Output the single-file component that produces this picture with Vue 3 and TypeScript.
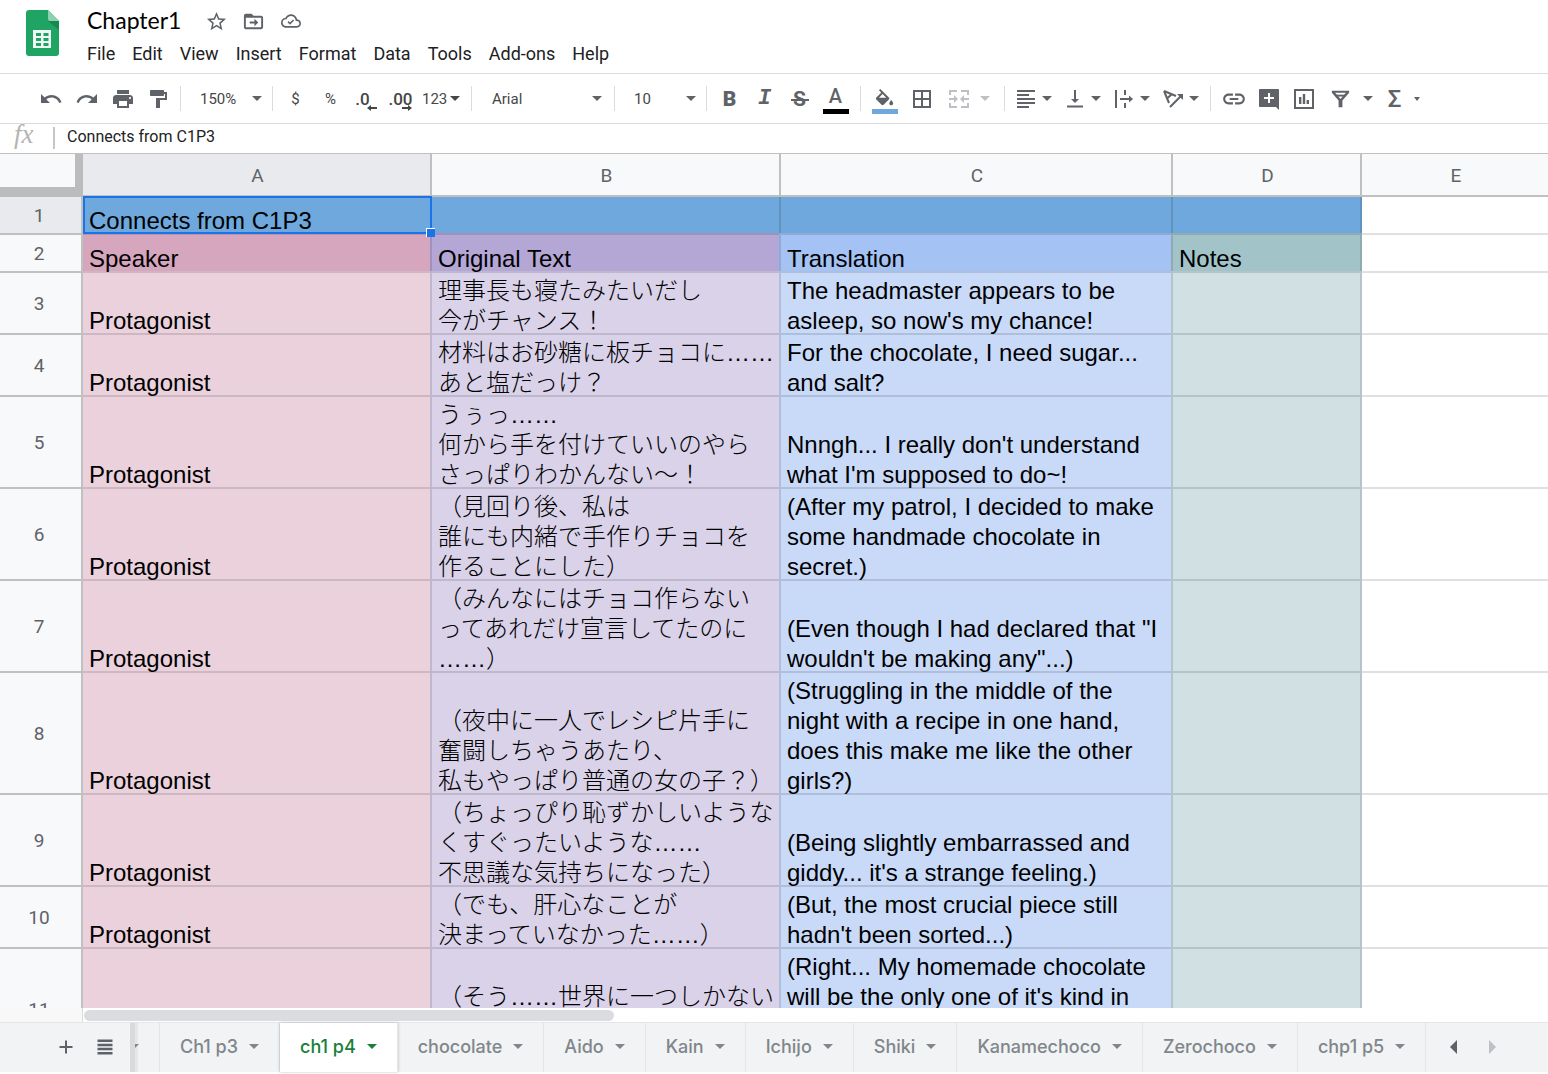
<script setup lang="ts">
interface Glyph {
  fill?: string
  line?: string
}

const glyphs: Record<string, Glyph> = {
  star: { fill: 'M22 9.24l-7.19-.62L12 2 9.19 8.63 2 9.24l5.46 4.73L5.82 21 12 17.27 18.18 21l-1.63-7.03L22 9.24zM12 15.4l-3.76 2.27 1-4.28-3.32-2.88 4.38-.38L12 6.1l1.71 4.04 4.38.38-3.32 2.88 1 4.28L12 15.4z' },
  move: { fill: 'M20 6h-8l-2-2H4c-1.1 0-1.99.9-1.99 2L2 18c0 1.1.9 2 2 2h16c1.1 0 2-.9 2-2V8c0-1.1-.9-2-2-2zm0 12H4V8h16v10zM13 17l4-4-4-4v3H8v2h5z' },
  cloud: { fill: 'M19.35 10.04C18.67 6.59 15.64 4 12 4 9.11 4 6.6 5.64 5.35 8.04 2.34 8.36 0 10.91 0 14c0 3.31 2.69 6 6 6h13c2.76 0 5-2.24 5-5 0-2.64-2.05-4.78-4.65-4.96zM19 18H6c-2.21 0-4-1.79-4-4 0-2.05 1.53-3.76 3.56-3.97l1.07-.11.5-.95C8.08 7.14 9.94 6 12 6c2.62 0 4.88 1.86 5.39 4.43l.3 1.5 1.53.11c1.56.1 2.78 1.41 2.78 2.96 0 1.65-1.35 3-3 3zm-8.2-4.2l-1.7-1.7-1.3 1.3 3 3 5-5-1.3-1.3z' },
  undo: { fill: 'M12.5 8c-2.65 0-5.05.99-6.9 2.6L2 7v9h9l-3.62-3.62c1.39-1.16 3.16-1.88 5.12-1.88 3.54 0 6.55 2.31 7.6 5.5l2.37-.78C21.08 11.03 17.15 8 12.5 8z' },
  redo: { fill: 'M18.4 10.6C16.55 8.99 14.15 8 11.5 8c-4.65 0-8.58 3.03-9.96 7.22L3.9 16c1.05-3.19 4.05-5.5 7.6-5.5 1.95 0 3.73.72 5.12 1.88L13 16h9V7l-3.6 3.6z' },
  print: { fill: 'M19 8H5c-1.66 0-3 1.34-3 3v6h4v4h12v-4h4v-6c0-1.66-1.34-3-3-3zm-3 11H8v-5h8v5zm3-7c-.55 0-1-.45-1-1s.45-1 1-1 1 .45 1 1-.45 1-1 1zm-1-9H6v4h12V3z' },
  paint: { fill: 'M4 3h12c.6 0 1 .4 1 1v1h3v8h-7v8h-4V11h9V7h-1v1c0 .6-.4 1-1 1H4c-.6 0-1-.4-1-1V4c0-.6.4-1 1-1z' },
  bucket: { fill: 'M16.56 8.94L7.62 0 6.21 1.41l2.38 2.38-5.15 5.15c-.59.59-.59 1.54 0 2.12l5.5 5.5c.29.29.68.44 1.06.44s.77-.15 1.06-.44l5.5-5.5c.59-.58.59-1.53 0-2.12zM6.2 9L10 5.21 13.8 9zM19 11.5s-2 2.17-2 3.5c0 1.1.9 2 2 2s2-.9 2-2c0-1.33-2-3.5-2-3.5z' },
  borders: { fill: 'M3 3v18h18V3H3zm8 16H5v-6h6v6zm0-8H5V5h6v6zm8 8h-6v-6h6v6zm0-8h-6V5h6v6z' },
  merge: { fill: 'M7 8l4 4-4 4zM17 8l-4 4 4 4z', line: 'M3 8V4h7M14 4h7v4M3 16v4h7M14 20h7v-4M2 12h6M16 12h6' },
  left: { fill: 'M3 3h18v2H3zM3 7h12v2H3zM3 11h18v2H3zM3 15h18v2H3zM3 19h12v2H3z' },
  bottom: { fill: 'M16 12h-3V3h-2v9H8l4 4 4-4zM4 18.5v2h16v-2z' },
  overflow: { fill: 'M17 8.5l4 3.5-4 3.5z', line: 'M4 3v18M13 3v5M13 16v5M8 12h10' },
  rotate: { fill: 'M16 7h6v6z', line: 'M3 4l5 12M3 4l12 5M6 11.5l5-4.5M9 20L20 9' },
  link: { fill: 'M3.9 12c0-1.71 1.39-3.1 3.1-3.1h4V7H7c-2.76 0-5 2.24-5 5s2.24 5 5 5h4v-1.9H7c-1.71 0-3.1-1.39-3.1-3.1zM8 13h8v-2H8v2zm9-6h-4v1.9h4c1.71 0 3.1 1.39 3.1 3.1s-1.39 3.1-3.1 3.1h-4V17h4c2.76 0 5-2.24 5-5s-2.24-5-5-5z' },
  comment: { fill: 'M22 3c0-.6-.4-1-1-1H3c-.6 0-1 .4-1 1v16c0 .6.4 1 1 1h16l3 3V3zm-5 9h-4v4h-2v-4H7v-2h4V6h2v4h4v2z' },
  chart: { fill: 'M7 10h2.4v7H7zM10.8 7h2.4v10h-2.4zM14.6 13H17v4h-2.4z', line: 'M3 3h18v18H3z' },
  filter: { fill: 'M3 4h18v2l-7 8v7h-4v-7L3 6zm3.4 2L12 12.400 17.600 6z', line: 'M7 9h10' },
  plus: { line: 'M12 5.5v13M5.5 12h13' },
  list: { fill: 'M3 3h18v3H3zM3 8h18v3H3zM3 13h18v3H3zM3 18h18v3H3z' }
}

const menus: string[] = ['File', 'Edit', 'View', 'Insert', 'Format', 'Data', 'Tools', 'Add-ons', 'Help']
const aligners: { icon: string; label: string }[] = [
  { icon: 'left', label: 'Horizontal align' },
  { icon: 'bottom', label: 'Vertical align' },
  { icon: 'overflow', label: 'Text wrapping' },
  { icon: 'rotate', label: 'Text rotation' }
]
const columns: string[] = ['A', 'B', 'C', 'D', 'E']

interface Row {
  kind: 'banner' | 'names' | 'body'
  cells: string[][]
}

const line = (jp: string[], en: string[], who = 'Protagonist'): Row => ({
  kind: 'body',
  cells: [[who], jp, en, []]
})

const rows: Row[] = [
  { kind: 'banner', cells: [['Connects from C1P3'], [], [], []] },
  { kind: 'names', cells: [['Speaker'], ['Original Text'], ['Translation'], ['Notes']] },
  line(['理事長も寝たみたいだし', '今がチャンス！'], ['The headmaster appears to be', "asleep, so now's my chance!"]),
  line(['材料はお砂糖に板チョコに……', 'あと塩だっけ？'], ['For the chocolate, I need sugar...', 'and salt?']),
  line(['うぅっ……', '何から手を付けていいのやら', 'さっぱりわかんない～！'], ["Nnngh... I really don't understand", "what I'm supposed to do~!"]),
  line(['（見回り後、私は', '誰にも内緒で手作りチョコを', '作ることにした）'], ['(After my patrol, I decided to make', 'some handmade chocolate in', 'secret.)']),
  line(['（みんなにはチョコ作らない', 'ってあれだけ宣言してたのに', '……）'], ['(Even though I had declared that "I', 'wouldn\'t be making any"...)']),
  line(['（夜中に一人でレシピ片手に', '奮闘しちゃうあたり、', '私もやっぱり普通の女の子？）'], ['(Struggling in the middle of the', 'night with a recipe in one hand,', 'does this make me like the other', 'girls?)']),
  line(['（ちょっぴり恥ずかしいような', 'くすぐったいような……', '不思議な気持ちになった）'], ['(Being slightly embarrassed and', "giddy... it's a strange feeling.)"]),
  line(['（でも、肝心なことが', '決まっていなかった……）'], ['(But, the most crucial piece still', "hadn't been sorted...)"]),
  line(['（そう……世界に一つしかない', '', ''], ['(Right... My homemade chocolate', "will be the only one of it's kind in", '', ''], '')
]

const tabs: string[] = ['Ch1 p3', 'ch1 p4', 'chocolate', 'Aido', 'Kain', 'Ichijo', 'Shiki', 'Kanamechoco', 'Zerochoco', 'chp1 p5']
const activeTab = 'ch1 p4'

const Icon = (props: { name: string; size?: number }) => {
  const g = glyphs[props.name]
  const size = props.size ?? 24
  return h('svg', { viewBox: '0 0 24 24', width: size, height: size, 'aria-hidden': 'true' }, [
    g.fill ? h('path', { d: g.fill, fill: 'currentColor', 'fill-rule': 'evenodd' }) : null,
    g.line ? h('path', { d: g.line, fill: 'none', stroke: 'currentColor', 'stroke-width': 2 }) : null
  ])
}
Icon.props = ['name', 'size']
</script>

<script lang="ts">
import { h } from 'vue'
</script>

<template>
  <div class="app">
    <header class="top">
      <svg class="logo" viewBox="0 0 33 46" width="33" height="46" aria-hidden="true">
        <path d="M3 0h19l11 11v32a3 3 0 0 1-3 3H3a3 3 0 0 1-3-3V3a3 3 0 0 1 3-3z" fill="#1fa463" />
        <path d="M22 11h11v9z" fill="#17894f" />
        <path d="M22 0l11 11H24a2 2 0 0 1-2-2z" fill="#8ed1b1" />
        <path fill-rule="evenodd" d="M7 20h18v18H7zM10 23v3h5v-3zm7.5 0v3h5v-3zM10 28v3h5v-3zm7.5 0v3h5v-3zM10 33v3h5v-3zm7.5 0v3h5v-3z" fill="#f1f8f4" />
      </svg>
      <div class="doc">
        <div class="title-row">
          <input class="title" aria-label="Document name" value="Chapter1" />
          <button class="flat" aria-label="Star"><Icon name="star" :size="23" /></button>
          <button class="flat" aria-label="Move"><Icon name="move" :size="23" /></button>
          <button class="flat" aria-label="Document status"><Icon name="cloud" :size="20" /></button>
        </div>
        <nav class="menus">
          <button v-for="m in menus" :key="m" class="menu">{{ m }}</button>
        </nav>
      </div>
    </header>

    <div class="toolbar" role="toolbar" aria-label="Main">
      <div class="group history">
        <button class="tool" aria-label="Undo"><Icon name="undo" /></button>
        <button class="tool" aria-label="Redo"><Icon name="redo" /></button>
        <button class="tool" aria-label="Print"><Icon name="print" /></button>
        <button class="tool" aria-label="Paint format"><Icon name="paint" /></button>
      </div>
      <div class="group zoom">
        <select aria-label="Zoom"><option>150%</option></select>
        <i class="caret"></i>
      </div>
      <div class="group number">
        <button class="tool">$</button>
        <button class="tool">%</button>
        <button class="tool decimal less" aria-label="Decrease decimal places">
          .0<svg class="arrow" viewBox="0 0 10 6" width="10" height="6"><path d="M0 3l4-3v2h6v2H4v2z" fill="currentColor" /></svg>
        </button>
        <button class="tool decimal" aria-label="Increase decimal places">
          .00<svg class="arrow" viewBox="0 0 10 6" width="10" height="6"><path d="M10 3L6 0v2H0v2h6v2z" fill="currentColor" /></svg>
        </button>
        <button class="formats">123<i class="caret"></i></button>
      </div>
      <div class="group font">
        <select aria-label="Font"><option>Arial</option></select>
        <i class="caret"></i>
      </div>
      <div class="group size">
        <select aria-label="Font size"><option>10</option></select>
        <i class="caret"></i>
      </div>
      <div class="group style">
        <button class="tool bold">B</button>
        <button class="tool italic">I</button>
        <button class="tool strike"><span>S</span></button>
        <button class="tool swatch"><span>A</span></button>
      </div>
      <div class="group cells">
        <button class="tool swatch paint" aria-label="Fill color"><Icon name="bucket" :size="23" /></button>
        <button class="tool wide" aria-label="Borders"><Icon name="borders" /></button>
        <button class="tool off" aria-label="Merge cells"><Icon name="merge" /></button>
        <button class="drop off" aria-label="Merge type"><i class="caret"></i></button>
      </div>
      <div class="group aligns">
        <button v-for="a in aligners" :key="a.icon" class="split" :aria-label="a.label">
          <Icon :name="a.icon" /><i class="caret"></i>
        </button>
      </div>
      <div class="group insert">
        <button class="tool" aria-label="Insert link"><Icon name="link" :size="26" /></button>
        <button class="tool" aria-label="Insert comment"><Icon name="comment" /></button>
        <button class="tool" aria-label="Insert chart"><Icon name="chart" /></button>
        <button class="tool filter" aria-label="Filter"><Icon name="filter" :size="23" /></button>
        <button class="drop" aria-label="Filter views"><i class="caret"></i></button>
        <button class="tool sigma">Σ</button>
        <button class="tiny" aria-label="Functions"><i class="caret small"></i></button>
      </div>
    </div>

    <div class="formula">
      <span class="fx">fx</span>
      <input aria-label="Formula" value="Connects from C1P3" />
    </div>

    <main class="grid">
      <table>
        <colgroup>
          <col class="w-num" /><col class="w-a" /><col class="w-b" /><col class="w-c" /><col class="w-d" /><col />
        </colgroup>
        <thead>
          <tr>
            <td class="corner"></td>
            <th v-for="c in columns" :key="c" scope="col" :class="'head-' + c.toLowerCase()">{{ c }}</th>
          </tr>
        </thead>
        <tbody>
          <tr v-for="(row, r) in rows" :key="r" :class="row.kind">
            <th scope="row">{{ r + 1 }}</th>
            <td v-for="(cell, c) in row.cells" :key="c" :class="'col-' + columns[c].toLowerCase()">
              <div v-if="cell.length" class="text">
                <span v-for="(t, i) in cell" :key="i">{{ t }}</span>
              </div>
              <div v-if="r === 0 && c === 0" class="selection"><i></i></div>
            </td>
            <td class="col-e"></td>
          </tr>
        </tbody>
      </table>
    </main>

    <div class="scroll"><div class="track"><div class="thumb"></div></div></div>

    <footer class="sheets">
      <div class="sheet-tools">
        <button class="flat" aria-label="Add sheet"><Icon name="plus" /></button>
        <button class="flat" aria-label="All sheets"><Icon name="list" :size="20" /></button>
      </div>
      <div class="cut"><i class="caret"></i></div>
      <button v-for="t in tabs" :key="t" class="tab" :class="{ active: t === activeTab }">
        {{ t }}<i class="caret"></i>
      </button>
      <div class="pager">
        <button class="flat" aria-label="Scroll left"><i class="prev"></i></button>
        <button class="flat" aria-label="Scroll right"><i class="next"></i></button>
      </div>
    </footer>
  </div>
</template>

<style>
body {
  margin: 0;
  background: #fff;
}
</style>

<style scoped>
* {
  box-sizing: border-box;
}
.app {
  display: flex;
  flex-direction: column;
  height: 100vh;
  padding-bottom: 2px;
  overflow: hidden;
  font-family: Roboto, 'Liberation Sans', sans-serif;
  color: #202124;
}
button,
input,
select {
  margin: 0;
  padding: 0;
  border: 0;
  outline: 0;
  background: none;
  font: inherit;
  color: inherit;
}
svg {
  display: block;
  flex: none;
}
.caret {
  flex: none;
  border: 5px solid transparent;
  border-top-color: currentColor;
  border-bottom: 0;
}
.flat {
  display: flex;
  align-items: center;
  justify-content: center;
}

/* header */
.top {
  display: flex;
  flex: none;
  height: 73px;
  padding-left: 26px;
}
.logo {
  margin-top: 10px;
}
.doc {
  margin-left: 20px;
}
.title-row {
  display: flex;
  align-items: center;
  height: 42px;
  padding-left: 8px;
  color: #5f6368;
}
.title {
  width: 111px;
  padding-bottom: 3px;
  font: 23px Lato, sans-serif;
  color: #000;
}
.title-row .flat {
  width: 37px;
  height: 40px;
}
.menus {
  display: flex;
  height: 22px;
}
.menu {
  padding: 0 9px 0 8px;
  font-size: 18px;
}

/* toolbar */
.toolbar {
  display: flex;
  flex: none;
  align-items: center;
  height: 51px;
  border-top: 1px solid #dadce0;
  border-bottom: 1px solid #dadce0;
  color: #5f6368;
  font-size: 15px;
}
.group {
  display: flex;
  flex: none;
  align-items: center;
  height: 25px;
  border-right: 1px solid #dadce0;
}
.tool {
  display: flex;
  align-items: center;
  justify-content: center;
  flex: none;
  width: 35px;
  height: 35px;
}
.history {
  width: 181px;
  padding-left: 33px;
  gap: 1px;
}
.zoom {
  width: 92px;
  padding: 0 10px 0 19px;
}
select {
  appearance: none;
  flex: 1;
  min-width: 0;
  color: #444746;
}
.number {
  width: 199px;
  padding-left: 5px;
  color: #444746;
}
.decimal {
  position: relative;
  font-size: 17px;
  font-weight: 500;
}
.decimal .arrow {
  position: absolute;
  right: 6px;
  bottom: 5px;
}
.less {
  padding-right: 6px;
}
.formats {
  display: flex;
  align-items: center;
  gap: 3px;
  padding-left: 4px;
}
.font {
  width: 143px;
  padding: 0 12px 0 20px;
}
.size {
  width: 92px;
  padding: 0 10px 0 19px;
}
.style {
  width: 154px;
  padding-left: 5px;
}
.bold {
  font-size: 21px;
  font-weight: 900;
}
.italic {
  font: italic bold 22px 'Liberation Mono', monospace;
}
.strike {
  position: relative;
  font-size: 21px;
  font-weight: 700;
}
.strike::after {
  content: '';
  position: absolute;
  left: 9px;
  right: 8px;
  top: 18px;
  height: 2px;
  background: currentColor;
}
.swatch {
  position: relative;
  width: 37px;
  padding-bottom: 6px;
  font-size: 20px;
  font-weight: 500;
}
.swatch::after {
  content: '';
  position: absolute;
  left: 6px;
  right: 5px;
  bottom: 2px;
  height: 5px;
  background: #000;
}
.paint {
  padding: 4px 0 0;
}
.paint::after {
  background: #6fa8dc;
}
.cells {
  width: 144px;
  padding-left: 5px;
}
.wide {
  width: 38px;
}
.drop {
  display: flex;
  justify-content: center;
  width: 18px;
}
.off {
  color: #bdc1c6;
}
.aligns {
  width: 206px;
  padding-left: 5px;
}
.split {
  display: flex;
  align-items: center;
  gap: 4px;
  width: 49px;
  padding-left: 4px;
}
.insert {
  padding-left: 5px;
  border-right: 0;
}
.filter {
  width: 38px;
}
.sigma {
  font-size: 24px;
  font-weight: 500;
}
.tiny {
  display: flex;
  padding-left: 2px;
}
.small {
  border-width: 4px 3px 0;
}

/* formula bar */
.formula {
  display: flex;
  flex: none;
  height: 30px;
  padding-top: 3px;
  border-bottom: 1px solid #c0c0c0;
}
.fx {
  width: 55px;
  height: 22px;
  padding-left: 14px;
  border-right: 2px solid #c6c6c6;
  font: italic 27px/14px 'Liberation Serif', serif;
  color: #b4b4b4;
}
.formula input {
  flex: 1;
  height: 18px;
  padding-left: 12px;
  font-size: 16px;
  color: #222;
}

/* spreadsheet */
.grid {
  flex: 1;
  min-height: 0;
  overflow: hidden;
}
table {
  width: 100%;
  table-layout: fixed;
  border-collapse: separate;
  border-spacing: 0;
}
.w-num {
  width: 83px;
}
.w-a {
  width: 347px;
}
.w-b {
  width: 349px;
}
.w-c {
  width: 392px;
}
.w-d {
  width: 191px;
}
th,
td {
  padding: 0;
}
th {
  background: #f8f9fa;
  font-size: 19px;
  font-weight: 400;
  color: #5f6368;
}
thead th {
  height: 43px;
  padding: 2px 0 0 2px;
  border-bottom: 2px solid #c0c0c0;
  border-left: 2px solid #c0c0c0;
}
.head-a {
  border-left: 0;
  background: #e8eaed;
}
.head-d {
  border-right: 2px solid #c0c0c0;
}
.head-e {
  border-left: 0;
}
.corner {
  border: solid #bcbcbc;
  border-width: 0 8px 10px 0;
  background: #f8f9fa;
}
tbody th {
  padding: 1px 3px 0 0;
  border-right: 2px solid #c0c0c0;
  border-top: 2px solid #c0c0c0;
}
tbody td {
  vertical-align: bottom;
  border-top: 2px solid rgba(0, 0, 0, 0.12);
  border-left: 2px solid rgba(0, 0, 0, 0.12);
}
tbody .col-a,
tbody .col-e {
  border-left: 0;
}
tbody .col-d {
  border-right: 2px solid rgba(0, 0, 0, 0.12);
}
.text {
  margin-bottom: -3px;
  padding: 3px 0 0 6px;
  font: 300 24px/30px 'Liberation Sans', 'Noto Sans CJK JP', sans-serif;
  color: #000;
  white-space: pre;
}
.text span {
  display: block;
  height: 30px;
}
.banner > * {
  height: 36px;
  border-top: 0;
}
.banner th {
  background: #e8eaed;
}
.banner td {
  background: #6fa8dc;
}
.banner .col-a {
  position: relative;
}
.names > * {
  height: 38px;
}
.names .col-a {
  background: #d5a6bd;
}
.names .col-b {
  background: #b4a7d6;
}
.names .col-c {
  background: #a4c2f4;
}
.names .col-d {
  background: #a2c4c9;
}
.body > * {
  height: 62px;
}
.body .col-a {
  background: #ead1dc;
}
.body .col-b {
  background: #d9d2e9;
}
.body .col-c {
  background: #c9daf8;
}
.body .col-d {
  background: #d0e0e3;
}
tbody .col-e {
  background: #fff;
}
.selection {
  position: absolute;
  inset: -1px -2px -1px 0;
  z-index: 1;
  border: 2px solid #1a73e8;
}
.selection i {
  position: absolute;
  right: -5px;
  bottom: -5px;
  width: 9px;
  height: 9px;
  border: solid #fff;
  border-width: 1px 0 0 1px;
  background: #1a73e8;
}

/* horizontal scroll bar */
.scroll {
  flex: none;
  height: 14px;
  padding-left: 82px;
  background: #f8f8f8;
}
.track {
  height: 14px;
  padding: 2px 1px 0;
  border-left: 1px solid #d9d9d9;
  background: #fff;
}
.thumb {
  width: 530px;
  height: 11px;
  border-radius: 6px;
  background: #dadce0;
}

/* sheet tabs */
.sheets {
  display: flex;
  flex: none;
  height: 50px;
  border-top: 1px solid #e3e5e8;
  background: #f1f3f4;
  color: #80868b;
}
.sheet-tools {
  display: flex;
  width: 130px;
  padding: 0 0 2px 46px;
  color: #5f6368;
}
.sheet-tools .flat {
  width: 39px;
}
.cut {
  display: flex;
  align-items: center;
  width: 30px;
  padding-bottom: 2px;
  overflow: hidden;
  border: solid #d9dbdb;
  border-width: 0 1px 0 5px;
  border-right-color: #e3e5e8;
  box-shadow: inset 3px 0 #e6e8e7;
}
.cut .caret {
  margin-left: -6px;
}
.tab {
  display: flex;
  flex: none;
  align-items: center;
  gap: 11px;
  padding: 0 20px 2px 20px;
  border-right: 1px solid #e3e5e8;
  font: 500 18px Inter, sans-serif;
}
.tab.active {
  background: #fff;
  color: #188038;
  box-shadow: 0 0 3px rgba(60, 64, 67, 0.3);
}
.pager {
  display: flex;
  padding: 0 0 2px 8px;
}
.pager .flat {
  width: 39px;
}
.prev {
  border: 7px solid transparent;
  border-right-color: #5f6368;
  border-left: 0;
}
.next {
  border: 7px solid transparent;
  border-left-color: #bdc1c6;
  border-right: 0;
}
</style>
